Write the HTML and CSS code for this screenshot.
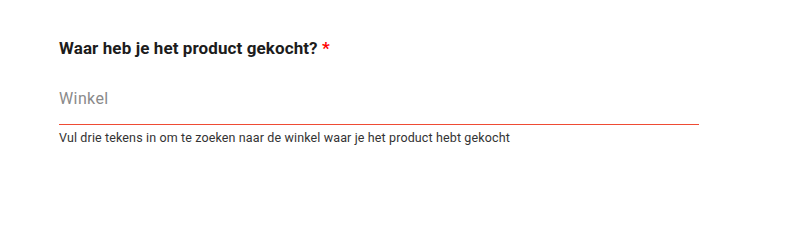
FILE: index.html
```html
<!DOCTYPE html>
<html lang="nl">
<head>
<meta charset="utf-8">
<title>Winkel</title>
<link rel="stylesheet" href="styles.css">
</head>
<body>
<div class="form">
  <h2 class="question">Waar heb je het product gekocht? <span class="req">*</span></h2>
  <div class="field">
    <input class="input" type="text" placeholder="Winkel">
  </div>
  <p class="helper">Vul drie tekens in om te zoeken naar de winkel waar je het product hebt gekocht</p>
</div>
</body>
</html>
```
FILE: styles.css
```css
html, body {
  margin: 0;
  padding: 0;
  background: #fff;
}
body {
  font-family: Roboto, "Liberation Sans", sans-serif;
  color: #1c1c1c;
}
.form {
  padding: 37px 0 0 59px;
  width: 640px;
}
.question {
  margin: 0;
  font-size: 17px;
  line-height: 22px;
  font-weight: 700;
  color: #1c1c1c;
  letter-spacing: 0.1px;
}
.req {
  color: #f00;
}
.field {
  margin-top: 26px;
  border-bottom: 1px solid #ef4b34;
}
.input {
  display: block;
  width: 100%;
  box-sizing: border-box;
  border: 0;
  outline: 0;
  padding: 0 0 13px;
  height: 39px;
  line-height: 26px;
  font-family: inherit;
  font-size: 16px;
  letter-spacing: 0.4px;
  color: #1c1c1c;
  background: transparent;
}
.input::placeholder {
  color: #8a8a8a;
}
.helper {
  margin: 5px 0 0;
  font-size: 12.5px;
  line-height: 16px;
  letter-spacing: 0.13px;
  color: #333;
}
```
